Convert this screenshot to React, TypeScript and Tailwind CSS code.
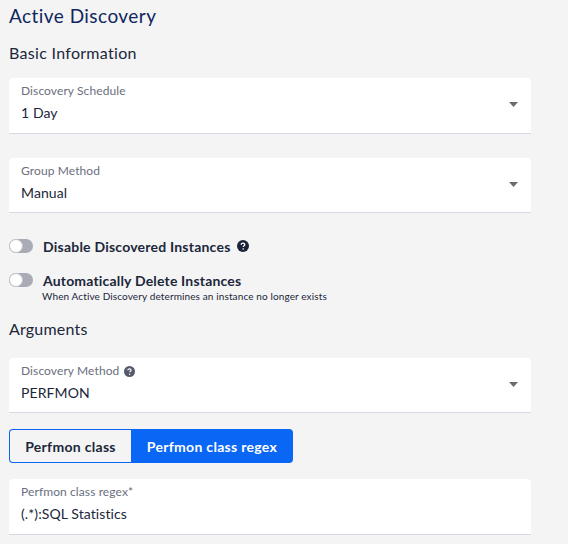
import React from 'react';

const Help = ({ size, color }: { size: number; color: string }) => (
  <svg width={size} height={size} viewBox="0 0 12 12" className="shrink-0">
    <circle cx="6" cy="6" r="6" fill={color} />
    <path d="M4.2 4.7c0-1 .8-1.6 1.8-1.6s1.8.6 1.8 1.5c0 1.2-1.5 1.2-1.5 2.3" fill="none" stroke="#fff" strokeWidth="1.3" />
    <circle cx="6.2" cy="9" r=".8" fill="#fff" />
  </svg>
);

const Caret = () => (
  <svg width="9" height="5" viewBox="0 0 9 5" className="absolute right-[13px] top-[24px]">
    <path d="M0 0h9L4.5 5z" fill="#6b6b6f" />
  </svg>
);

const Field = ({ label, value, select, help, className }: { label: string; value: string; select?: boolean; help?: boolean; className?: string }) => (
  <div className={`relative w-[522px] h-[55px] bg-white rounded-t-[4px] border-b border-[#d6d8e4] pl-3 pt-[5px] ${className ?? ''}`}>
    <div className="flex items-center gap-[5px] h-[16px] text-[12px] tracking-[0.1px] text-[#6a6e80]">
      {label}
      {help && <Help size={11} color="#55596a" />}
    </div>
    <div className="mt-[4px] h-[20px] leading-[20px] text-[14px] tracking-[0.1px] text-[#20263a]">{value}</div>
    {select && <Caret />}
  </div>
);

const Toggle = () => (
  <div className="relative w-6 h-[14px] rounded-full bg-[#a9abb5] shrink-0">
    <div className="absolute left-0 top-0 w-[14px] h-[14px] rounded-full bg-white border border-[#c4c5cc]" />
  </div>
);

export default function App() {
  return (
    <div className="w-[568px] h-[544px] overflow-hidden bg-[#f4f4f4] pl-[9px] font-['Lato',sans-serif]">
      <h1 className="pt-[2px] h-[31px] leading-[27px] text-[19px] tracking-[0.45px] text-[#10265f]">Active Discovery</h1>
      <h2 className="mt-[11px] h-[22px] leading-[22px] text-[16px] tracking-[0.3px] text-[#20263a]">Basic Information</h2>

      <Field label="Discovery Schedule" value="1 Day" select className="mt-[14px] h-[56px]" />
      <Field label="Group Method" value="Manual" select className="mt-[24px]" />

      <div className="mt-[26px] flex items-center h-[14px]">
        <Toggle />
        <span className="ml-[10px] mr-[6px] text-[14px] font-bold tracking-[0.22px] text-[#20263a]">Disable Discovered Instances</span>
        <Help size={12} color="#1c2238" />
      </div>
      <div className="mt-[20px] flex items-center h-[14px]">
        <Toggle />
        <span className="ml-[10px] text-[14px] font-bold tracking-[0.18px] text-[#20263a]">Automatically Delete Instances</span>
      </div>
      <p className="mt-[2px] ml-[33px] h-[14px] leading-[14px] text-[10px] tracking-[0.12px] text-[#20263a]">When Active Discovery determines an instance no longer exists</p>

      <h2 className="mt-[15px] h-[22px] leading-[22px] text-[16px] tracking-[0.2px] text-[#20263a]">Arguments</h2>

      <Field label="Discovery Method" value="PERFMON" select help className="mt-[18px]" />

      <div className="mt-[16px] flex w-[284px] h-[34px]">
        <button className="w-[122px] border border-[#0a66f5] border-r-0 rounded-l-[4px] text-[14px] font-bold tracking-[0.3px] text-[#20263a]">Perfmon class</button>
        <button className="flex-1 bg-[#0a66f5] rounded-r-[4px] text-[14px] font-bold tracking-[0.3px] text-white">Perfmon class regex</button>
      </div>

      <Field label="Perfmon class regex*" value="(.*):SQL Statistics" className="mt-[16px] h-[56px]" />
    </div>
  );
}
